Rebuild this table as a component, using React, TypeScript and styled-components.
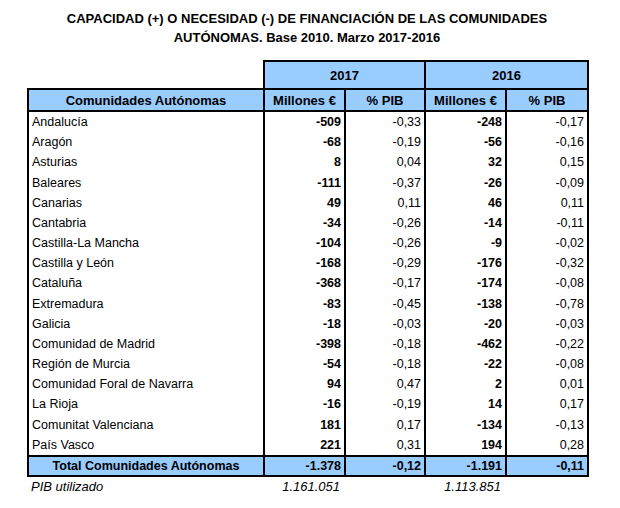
import React from "react";
import styled, { createGlobalStyle } from "styled-components";

const Global = createGlobalStyle`
  html, body { margin: 0; padding: 0; background: #fff; }
  body { font-family: "Liberation Sans", Arial, sans-serif; color: #000; }
`;

const Page = styled.div`
  width: 620px;
  height: 508px;
  padding: 9px 0 0 27px;
  box-sizing: border-box;
`;

const Title = styled.h1`
  width: 560px;
  margin: 0 0 13px 0;
  font-size: 13px;
  line-height: 19px;
  font-weight: bold;
  text-align: center;
`;

const Table = styled.table`
  border-collapse: collapse;
  table-layout: fixed;
  width: 560px;
  font-size: 12.5px;
`;

const Blank = styled.td`
  border: none;
  height: 27px;
  padding: 0;
`;

const YearCell = styled.th`
  background: #99ccff;
  border: 2px solid #000;
  font-weight: bold;
  font-size: 13px;
  text-align: center;
  padding: 0;
`;

const HeadCell = styled.th`
  background: #99ccff;
  border: 2px solid #000;
  font-weight: bold;
  font-size: 13px;
  text-align: center;
  height: 20px;
  padding: 0;
`;

const Cell = styled.td<{ $bold?: boolean; $align?: "left" | "right" }>`
  border-left: 2px solid #000;
  border-right: 2px solid #000;
  height: 20.18px;
  padding: 0 3px 0 3px;
  text-align: ${(p) => p.$align ?? "right"};
  font-weight: ${(p) => (p.$bold ? "bold" : "normal")};
  white-space: nowrap;
`;

const TotalCell = styled.td<{ $align?: "center" | "right" }>`
  background: #99ccff;
  border: 2px solid #000;
  height: 18px;
  padding: 0 3px;
  font-weight: bold;
  text-align: ${(p) => p.$align ?? "right"};
`;

const FootCell = styled.td<{ $align?: "left" | "right" }>`
  border: none;
  height: 20px;
  font-style: italic;
  padding: 0 ${(p) => (p.$align === "right" ? "5px" : "0")} 0 ${(p) => (p.$align === "right" ? "0" : "3px")};
  text-align: ${(p) => p.$align ?? "left"};
  font-size: 13px;
`;

type Row = [string, string, string, string, string];

const rows: Row[] = [
  ["Andalucía", "-509", "-0,33", "-248", "-0,17"],
  ["Aragón", "-68", "-0,19", "-56", "-0,16"],
  ["Asturias", "8", "0,04", "32", "0,15"],
  ["Baleares", "-111", "-0,37", "-26", "-0,09"],
  ["Canarias", "49", "0,11", "46", "0,11"],
  ["Cantabria", "-34", "-0,26", "-14", "-0,11"],
  ["Castilla-La Mancha", "-104", "-0,26", "-9", "-0,02"],
  ["Castilla y León", "-168", "-0,29", "-176", "-0,32"],
  ["Cataluña", "-368", "-0,17", "-174", "-0,08"],
  ["Extremadura", "-83", "-0,45", "-138", "-0,78"],
  ["Galicia", "-18", "-0,03", "-20", "-0,03"],
  ["Comunidad de Madrid", "-398", "-0,18", "-462", "-0,22"],
  ["Región de Murcia", "-54", "-0,18", "-22", "-0,08"],
  ["Comunidad Foral de Navarra", "94", "0,47", "2", "0,01"],
  ["La Rioja", "-16", "-0,19", "14", "0,17"],
  ["Comunitat Valenciana", "181", "0,17", "-134", "-0,13"],
  ["País Vasco", "221", "0,31", "194", "0,28"],
];

export default function App() {
  return (
    <Page>
      <Global />
      <Title>
        CAPACIDAD (+) O NECESIDAD (-) DE FINANCIACIÓN DE LAS COMUNIDADES
        <br />
        AUTÓNOMAS. Base 2010. Marzo 2017-2016
      </Title>
      <Table>
        <colgroup>
          <col style={{ width: 236 }} />
          <col style={{ width: 81 }} />
          <col style={{ width: 80 }} />
          <col style={{ width: 81 }} />
          <col style={{ width: 82 }} />
        </colgroup>
        <thead>
          <tr>
            <Blank />
            <YearCell colSpan={2}>2017</YearCell>
            <YearCell colSpan={2}>2016</YearCell>
          </tr>
          <tr>
            <HeadCell>Comunidades Autónomas</HeadCell>
            <HeadCell>Millones €</HeadCell>
            <HeadCell>% PIB</HeadCell>
            <HeadCell>Millones €</HeadCell>
            <HeadCell>% PIB</HeadCell>
          </tr>
        </thead>
        <tbody>
          {rows.map((r) => (
            <tr key={r[0]}>
              <Cell $align="left">{r[0]}</Cell>
              <Cell $bold>{r[1]}</Cell>
              <Cell>{r[2]}</Cell>
              <Cell $bold>{r[3]}</Cell>
              <Cell>{r[4]}</Cell>
            </tr>
          ))}
          <tr>
            <TotalCell $align="center">Total Comunidades Autónomas</TotalCell>
            <TotalCell>-1.378</TotalCell>
            <TotalCell>-0,12</TotalCell>
            <TotalCell>-1.191</TotalCell>
            <TotalCell>-0,11</TotalCell>
          </tr>
          <tr>
            <FootCell>PIB utilizado</FootCell>
            <FootCell $align="right">1.161.051</FootCell>
            <FootCell />
            <FootCell $align="right">1.113.851</FootCell>
            <FootCell />
          </tr>
        </tbody>
      </Table>
    </Page>
  );
}
